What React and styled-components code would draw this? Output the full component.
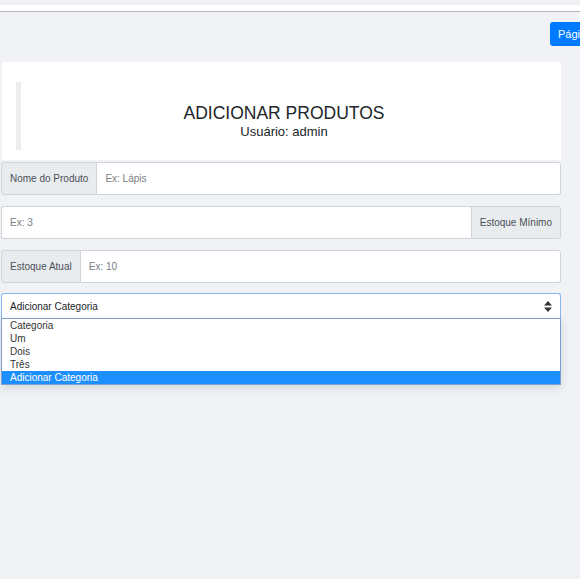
import React from "react";
import styled, { createGlobalStyle } from "styled-components";

const GlobalStyle = createGlobalStyle`
  body {
    margin: 0;
    background-color: #f0f2f5;
    font-family: "Liberation Sans", Arial, sans-serif;
  }
`;

const Page = styled.div`
  min-height: 579px;
  overflow: hidden;
`;

const TopStrip = styled.div`
  height: 5px;
  background-color: #eff0f3;
`;

const NavBar = styled.div`
  height: 6px;
  background-color: #fff;
  border-bottom: 1px solid #b5b5b5;
`;

const ButtonRow = styled.div`
  display: flex;
  padding: 10px 0 0 550px;
  height: 24px;
  overflow: hidden;
  white-space: nowrap;
`;

const HomeButton = styled.button`
  flex-shrink: 0;
  height: 24px;
  padding: 0 8px;
  border: none;
  border-radius: 3px;
  background-color: #007bff;
  color: #fff;
  font-family: "Liberation Sans", Arial, sans-serif;
  font-size: 11px;
`;

const Form = styled.div`
  width: 560px;
  margin: 16px 0 0 1px;
`;

const Card = styled.div`
  margin-left: 1px;
  padding: 20px 14px 10px;
  background-color: #fff;
`;

const Quote = styled.div`
  height: 58px;
  padding-top: 10px;
  border-left: 5px solid #eeeeee;
  display: flex;
  flex-direction: column;
  align-items: center;
  justify-content: center;
  color: #212529;
`;

const Title = styled.h1`
  margin: 0;
  font-size: 17.5px;
  font-weight: 400;
  line-height: 21px;
`;

const Subtitle = styled.div`
  font-size: 13px;
  line-height: 16px;
`;

const Group = styled.div`
  display: flex;
  height: 33px;
  margin-top: ${(props) => (props.$first ? "2px" : "11px")};
`;

const Addon = styled.span`
  display: flex;
  align-items: center;
  padding: 0 8px;
  background-color: #e9ecef;
  border: 1px solid #ced4da;
  color: #495057;
  font-size: 10px;
  border-radius: ${(props) => (props.$right ? "0 3px 3px 0" : "3px 0 0 3px")};
`;

const Input = styled.input`
  flex: 1;
  min-width: 0;
  padding: 0 8px;
  border: 1px solid #ced4da;
  border-left: ${(props) => (props.$right ? "1px solid #ced4da" : "none")};
  border-right: ${(props) => (props.$right ? "none" : "1px solid #ced4da")};
  border-radius: ${(props) => (props.$right ? "3px 0 0 3px" : "0 3px 3px 0")};
  background-color: #fff;
  font-family: "Liberation Sans", Arial, sans-serif;
  font-size: 10px;
  color: #495057;

  &::placeholder {
    color: #777d83;
  }
`;

const SelectWrap = styled.div`
  margin-top: 10px;
`;

const SelectBox = styled.div`
  display: flex;
  align-items: center;
  justify-content: space-between;
  height: 24px;
  padding: 0 8px;
  border: 1px solid #86b7f0;
  border-bottom: none;
  border-radius: 3px 3px 0 0;
  background-color: #fff;
  color: #212529;
  font-size: 10px;
`;

const Arrows = styled.svg`
  width: 8px;
  height: 11px;
`;

const OptionList = styled.div`
  background-color: #fff;
  border: 1px solid #7f9fcf;
  box-shadow: 0 3px 10px rgba(0, 0, 0, 0.12);
`;

const OptionItem = styled.div`
  height: 13px;
  line-height: 13px;
  padding: 0 8px;
  font-size: 10px;
  color: ${(props) => (props.$active ? "#fff" : "#333")};
  background-color: ${(props) => (props.$active ? "#1e8fff" : "#fff")};
`;

const categorias = ["Categoria", "Um", "Dois", "Três", "Adicionar Categoria"];

const App = () => {
  return (
    <Page>
      <GlobalStyle />
      <TopStrip />
      <NavBar />
      <ButtonRow>
        <HomeButton>Página Inicial</HomeButton>
      </ButtonRow>
      <Form>
        <Card>
          <Quote>
            <Title>ADICIONAR PRODUTOS</Title>
            <Subtitle>Usuário: admin</Subtitle>
          </Quote>
        </Card>
        <Group $first>
          <Addon>Nome do Produto</Addon>
          <Input placeholder="Ex: Lápis" />
        </Group>
        <Group>
          <Input $right placeholder="Ex: 3" />
          <Addon $right>Estoque Mínimo</Addon>
        </Group>
        <Group>
          <Addon>Estoque Atual</Addon>
          <Input placeholder="Ex: 10" />
        </Group>
        <SelectWrap>
          <SelectBox>
            <span>Adicionar Categoria</span>
            <Arrows viewBox="0 0 8 11">
              <path d="M4 0 L8 4.5 H0 Z M0 6.5 H8 L4 11 Z" fill="#333" />
            </Arrows>
          </SelectBox>
          <OptionList>
            {categorias.map((c, i) => (
              <OptionItem key={i} $active={i === categorias.length - 1}>
                {c}
              </OptionItem>
            ))}
          </OptionList>
        </SelectWrap>
      </Form>
    </Page>
  );
};

export default App;
